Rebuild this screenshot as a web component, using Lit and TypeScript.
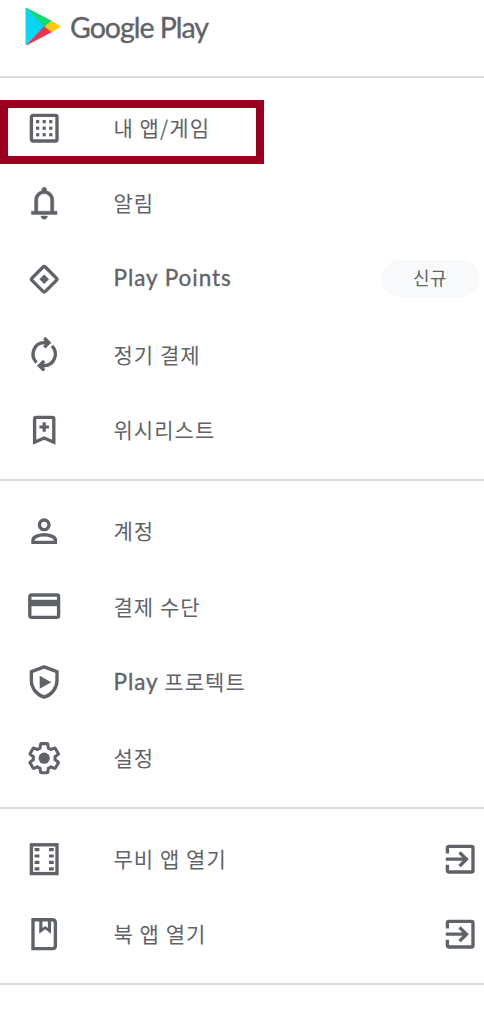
import { LitElement, html, svg, css, nothing } from "lit";
import { customElement, property } from "lit/decorators.js";

const GEAR =
  "M19.43 12.98c.04-.32.07-.64.07-.98 0-.34-.03-.66-.07-.98l2.11-1.65c.19-.15.24-.42.12-.64l-2-3.46c-.09-.16-.26-.25-.44-.25-.06 0-.12.01-.17.03l-2.49 1c-.52-.4-1.08-.73-1.69-.98l-.38-2.65C14.46 2.18 14.25 2 14 2h-4c-.25 0-.46.18-.49.42l-.38 2.65c-.61.25-1.17.59-1.69.98l-2.49-1c-.06-.02-.12-.03-.18-.03-.17 0-.34.09-.43.25l-2 3.46c-.13.22-.07.49.12.64l2.11 1.65c-.04.32-.07.65-.07.98 0 .33.03.66.07.98l-2.11 1.65c-.19.15-.24.42-.12.64l2 3.46c.09.16.26.25.44.25.06 0 .12-.01.17-.03l2.49-1c.52.4 1.08.73 1.69.98l.38 2.65c.03.24.24.42.49.42h4c.25 0 .46-.18.49-.42l.38-2.65c.61-.25 1.17-.59 1.69-.98l2.49 1c.06.02.12.03.18.03.17 0 .34-.09.43-.25l2-3.46c.12-.22.07-.49-.12-.64l-2.11-1.65z";

const ICONS: Record<string, unknown> = {
  apps: svg`<rect class="line" x="4" y="4" width="16" height="16" rx="1"/>
    ${[6.9, 11, 15.1].map((y) => [6.9, 11, 15.1].map((x) => svg`<rect x=${x} y=${y} width="2" height="2"/>`))}`,
  bell: svg`<path stroke="currentColor" stroke-width=".3" d="M4 19v-2h2v-7q0-2.075 1.25-3.688Q8.5 4.7 10.5 4.2v-.7q0-.625.438-1.062Q11.375 2 12 2t1.063.438q.437.437.437 1.062v.7q2 .5 3.25 2.112Q18 7.925 18 10v7h2v2Zm8 3q-.825 0-1.412-.587Q10 20.825 10 20h4q0 .825-.587 1.413Q12.825 22 12 22Zm-4-5h8v-7q0-1.65-1.175-2.825Q13.65 6 12 6q-1.65 0-2.825 1.175Q8 8.35 8 10Z"/>`,
  points: svg`<rect class="line" x="6.1" y="6.1" width="11.8" height="11.8" rx="1" transform="rotate(45 12 12)"/>
    <path d="M12 9l3 3-3 3-3-3z"/>`,
  renew: svg`<g class="line"><path d="M7.2 17.2A7 7.200 0 0 1 12 4.800h2.500M12 1.900l3 2.900-3 2.900"/>
    <path d="M16.8 6.8A7 7.200 0 0 1 12 19.200H9.500M12 22.100l-3-2.900 3-2.900"/></g>`,
  wish: svg`<path class="line" d="M6 19.5V5q0-1 1-1h10q1 0 1 1v14.5l-6-2.6z"/>
    <path d="M11 7h2v2h2v2h-2v2h-2v-2H9V9h2z"/>`,
  person: svg`<circle class="line" cx="12" cy="8" r="3"/>
    <path class="line" d="M5 19v-1.5C5 15.400 9 14.200 12 14.200s7 1.200 7 3.300V19z"/>`,
  card: svg`<rect class="line" x="3" y="5" width="18" height="14" rx="1"/><path d="M3 8h18v4H3z"/>`,
  shield: svg`<path class="line" d="M12 2.400l8 3v5.600c0 4.800-3.300 8.900-8 10.300-4.700-1.400-8-5.500-8-10.300V5.400z"/>
    <path d="M9.200 7.900l7.200 4.100-7.200 4.100z"/>`,
  gear: svg`<path class="line" transform="translate(12 12) scale(.91) translate(-12 -12)" d=${GEAR}/>
    <circle cx="12" cy="12" r="3.500"/>`,
  movie: svg`<rect class="line" x="4" y="3" width="16" height="18"/>
    ${[5, 9, 13, 17].map((y) => svg`<path d="M6 ${y}h3v2H6zM15 ${y}h3v2h-3z"/>`)}`,
  book: svg`<path class="line" d="M5 3h12q2 0 2 2v14q0 2-2 2H5z"/>
    <path d="M8.900 3h2v5.200l1.700-1.300 1.700 1.300V3h2v8.700l-3.700-2.800-3.700 2.800z"/>`,
  open: svg`<path class="line" d="M4 8.500V5q0-1 1-1h14q1 0 1 1v14q0 1-1 1H5q-1 0-1-1v-3.500"/>
    <path class="line" d="M3 12h12.500M11.600 7.700l4.300 4.300-4.300 4.300"/>`,
};

@customElement("menu-icon")
class MenuIcon extends LitElement {
  @property() name = "";
  static styles = css`
    :host { display: block; flex: none; width: 38.4px; height: 38.4px; color: #5f6368; }
    svg { display: block; width: 100%; height: 100%; fill: currentColor; }
    .line { fill: none; stroke: currentColor; stroke-width: 2.1; }
  `;
  render() {
    return html`<svg viewBox="0 0 24 24">${ICONS[this.name]}</svg>`;
  }
}

interface Item {
  icon: string;
  label: string;
  latin?: string;
  badge?: string;
  opens?: boolean;
  marked?: boolean;
}

const SECTIONS: Item[][] = [
  [
    { icon: "apps", label: "내 앱/게임", marked: true },
    { icon: "bell", label: "알림" },
    { icon: "points", latin: "Play Points", label: "", badge: "신규" },
    { icon: "renew", label: "정기 결제" },
    { icon: "wish", label: "위시리스트" },
  ],
  [
    { icon: "person", label: "계정" },
    { icon: "card", label: "결제 수단" },
    { icon: "shield", latin: "Play", label: " 프로텍트" },
    { icon: "gear", label: "설정" },
  ],
  [
    { icon: "movie", label: "무비 앱 열기", opens: true },
    { icon: "book", label: "북 앱 열기", opens: true },
  ],
];

@customElement("app-root")
class AppRoot extends LitElement {
  static styles = css`
    :host {
      display: block;
      height: 1024px;
      overflow: hidden;
      background: #fff;
      color: #5f6368;
      font-family: "Noto Sans CJK KR", sans-serif;
    }
    header {
      box-sizing: border-box;
      height: 78px;
      padding: 7px 0 0 25px;
      border-bottom: 2px solid #dadcdc;
      display: flex;
      align-items: flex-start;
      gap: 9px;
    }
    .logo { display: block; width: 36px; height: 39px; flex: none; }
    .brand {
      font: 400 28.5px/40px Lato, sans-serif;
      letter-spacing: -1px;
      white-space: nowrap;
      -webkit-text-stroke: 0.35px #5f6368;
    }
    .section {
      box-sizing: border-box;
      padding: 12px 0 11.3px;
      border-bottom: 2px solid #dadcdc;
    }
    .row {
      position: relative;
      display: flex;
      align-items: center;
      height: 75.6px;
      padding: 0 5px 0 24.8px;
    }
    .label {
      flex: 1;
      margin-left: 50.3px;
      padding-bottom: 2px;
      font-size: 21px;
      line-height: 30px;
      letter-spacing: 1.05px;
      white-space: pre;
    }
    .latin {
      font: 400 22.5px/30px Lato, sans-serif;
      letter-spacing: 0.95px;
      -webkit-text-stroke: 0.35px #5f6368;
    }
    .badge {
      width: 98px;
      height: 37px;
      border-radius: 19px;
      background: #f8f9fb;
      text-align: center;
      font-size: 18px;
      line-height: 34px;
      letter-spacing: 0.5px;
    }
    .mark {
      position: absolute;
      box-sizing: border-box;
      left: 0;
      top: 10px;
      width: 264px;
      height: 64px;
      border: 8px solid #9b001f;
    }
  `;

  row(item: Item) {
    return html`<div class="row">
      <menu-icon name=${item.icon}></menu-icon>
      <span class="label">${item.latin ? html`<span class="latin">${item.latin}</span>` : nothing}${item.label}</span>
      ${item.badge ? html`<span class="badge">${item.badge}</span>` : nothing}
      ${item.opens ? html`<menu-icon name="open"></menu-icon>` : nothing}
      ${item.marked ? html`<div class="mark"></div>` : nothing}
    </div>`;
  }

  render() {
    return html`
      <header>
        <svg class="logo" viewBox="0 0 36 39">
          <defs>
            <linearGradient id="blue" x1="1" y1="0" x2="0" y2="1">
              <stop offset="0" stop-color="#12c4ee"/><stop offset="1" stop-color="#00e2ff"/>
            </linearGradient>
          </defs>
          <path fill="url(#blue)" d="M.5 1.500Q.5.600 1.500 1.200L20 19.500 1.500 37.400Q.5 38 .5 37z"/>
          <path fill="#0ddb74" d="M1 1Q1.800.7 3.200 1.500L27 14 20 20.500z"/>
          <path fill="#ec3350" d="M1 37.900Q1.800 38.300 3.200 37.400L27 25 20 18.500z"/>
          <path fill="#ffc80a" d="M26.500 13.800l8.300 4.900q1.300.8 0 1.600L26.500 25.200l-7-5.700z"/>
        </svg>
        <span class="brand">Google Play</span>
      </header>
      ${SECTIONS.map((s) => html`<div class="section">${s.map((i) => this.row(i))}</div>`)}
    `;
  }
}
